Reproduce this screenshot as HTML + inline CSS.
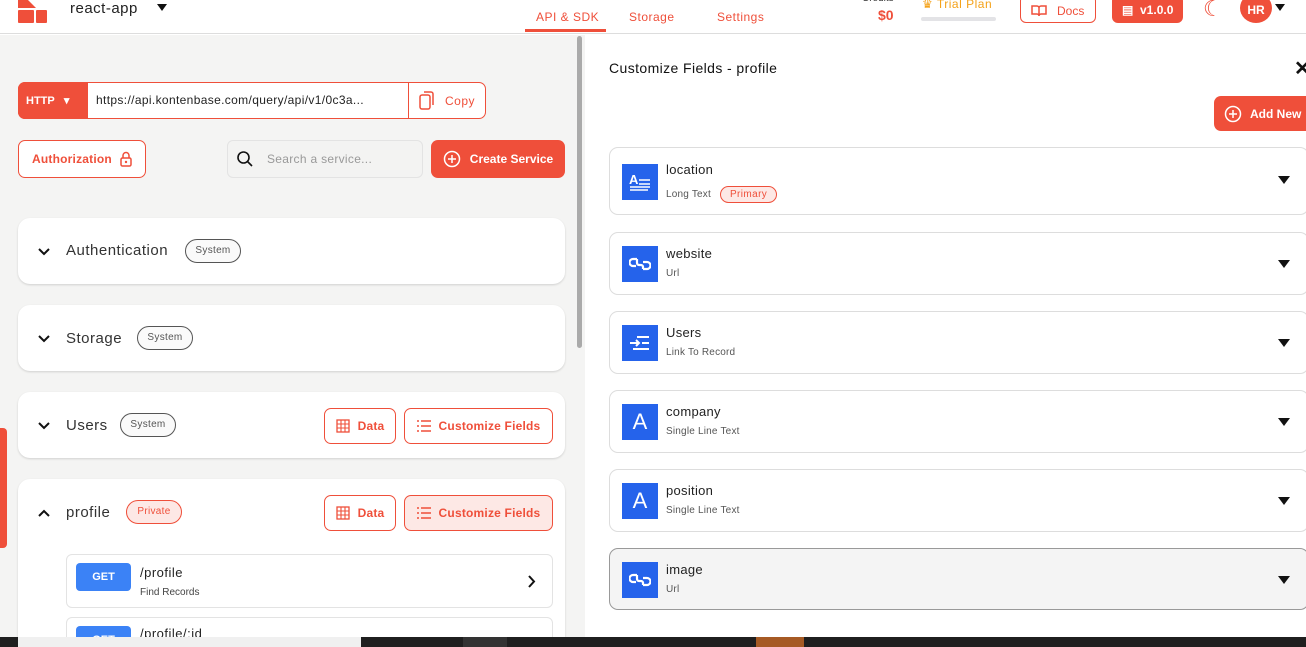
<!DOCTYPE html>
<html><head><meta charset="utf-8"><style>
*{box-sizing:border-box;margin:0;padding:0}
html,body{width:1306px;height:647px;overflow:hidden}
body{font-family:"Liberation Sans",sans-serif;background:#fff;position:relative;color:#222}
#root{position:absolute;left:0;top:0;width:1306px;height:647px;overflow:hidden}
.a{position:absolute}
.red{color:#ef4f3a}
.card{position:absolute;left:18px;width:547px;background:#fff;border-radius:12px;box-shadow:0 1px 2px rgba(0,0,0,.15)}
.chev{position:absolute;left:20px}
.sys{position:absolute;border:1px solid #555;border-radius:12px;font-size:10px;color:#555;height:24px;line-height:22px;text-align:center;width:56px;background:#fafafa;letter-spacing:.3px}
.ob{position:absolute;border:1px solid #ef4f3a;border-radius:7px;color:#ef4f3a;font-size:12px;font-weight:bold;display:flex;align-items:center;justify-content:center;gap:8px;height:36px;letter-spacing:.2px}
.f{position:absolute;left:609px;width:700px;border:1px solid #ddd;border-radius:9px;height:64px;background:#fff}
.f .ic{position:absolute;left:12px;top:15px;width:36px;height:36px;background:#2563eb;color:#fff;display:flex;align-items:center;justify-content:center}
.f .n{position:absolute;left:56px;top:14px;font-size:13px;letter-spacing:.3px}
.f .s{position:absolute;left:56px;top:38px;font-size:10px;color:#555;letter-spacing:.2px}
.f .tri{position:absolute;right:18px;top:28px;width:0;height:0;border-left:6px solid transparent;border-right:6px solid transparent;border-top:8px solid #111}
.t{letter-spacing:.5px}
</style></head><body><div id="root">
<!-- header -->
<div class="a" style="left:0;top:0;width:1306px;height:34px;border-bottom:1px solid #ddd;background:#fff"></div>
<svg class="a" style="left:18px;top:0" width="30" height="24"><rect x="0" y="0" width="10" height="8" fill="#ef4f3a"/><rect x="0" y="10" width="16" height="13" rx="1" fill="#ef4f3a"/><rect x="18" y="10" width="11" height="13" rx="1" fill="#ef4f3a"/><path d="M10 0 L18 8 L10 8Z" fill="#ef4f3a"/></svg>
<div class="a t" style="left:70px;top:0;font-size:15px;color:#222">react-app</div>
<div class="a" style="left:157px;top:4px;border-left:5px solid transparent;border-right:5px solid transparent;border-top:7px solid #111"></div>
<div class="a red t" style="left:536px;top:10px;font-size:12px">API &amp; SDK</div>
<div class="a" style="left:525px;top:29px;width:81px;height:3px;background:#ef4f3a"></div>
<div class="a red t" style="left:629px;top:10px;font-size:12px">Storage</div>
<div class="a red t" style="left:717px;top:10px;font-size:12px">Settings</div>
<div class="a" style="left:862px;top:-7px;font-size:10px;color:#333">Credits</div>
<div class="a red" style="left:878px;top:7px;font-size:14px;font-weight:bold">$0</div>
<div class="a t" style="left:922px;top:-3px;font-size:12px;color:#f4a21a">♛ Trial Plan</div>
<div class="a" style="left:921px;top:17px;width:75px;height:4px;border-radius:2px;background:#e3e3e6"></div>
<div class="a" style="left:1020px;top:-5px;width:76px;height:28px;border:1px solid #ef4f3a;border-radius:6px;color:#ef4f3a;font-size:12px;padding:8px 0 0 10px"><svg width="16" height="13" style="vertical-align:-2px"><path d="M1 2h5a2 2 0 0 1 2 2v8a2 2 0 0 0-2-2H1zM15 2h-5a2 2 0 0 0-2 2v8a2 2 0 0 1 2-2h5z" fill="none" stroke="#ef4f3a" stroke-width="1.5"/></svg>&nbsp;&nbsp; Docs</div>
<div class="a" style="left:1112px;top:-5px;width:71px;height:28px;background:#ef4f3a;border-radius:6px;color:#fff;font-size:12px;font-weight:bold;padding:8px 0 0 10px">&#x25A4;&nbsp; v1.0.0</div>
<div class="a red" style="left:1203px;top:-4px;font-size:22px">☾</div>
<div class="a" style="left:1240px;top:-7px;width:32px;height:30px;border-radius:50%;background:#ef4f3a;color:#fff;font-size:12px;font-weight:bold;text-align:center;padding-top:10px">HR</div>
<div class="a" style="left:1275px;top:4px;border-left:5px solid transparent;border-right:5px solid transparent;border-top:7px solid #111"></div>
<!-- left panel -->
<div class="a" style="left:0;top:35px;width:585px;height:602px;background:#f4f4f3"></div>
<div class="a" style="left:577px;top:36px;width:5px;height:312px;background:#aaa;border-radius:3px"></div>
<div class="a" style="left:0;top:428px;width:7px;height:120px;background:#ef4f3a;border-radius:0 4px 4px 0"></div>
<div class="a" style="left:18px;top:82px;width:468px;height:37px;border-radius:7px;background:#fff;border:1px solid #ef4f3a"></div>
<div class="a" style="left:18px;top:82px;width:70px;height:37px;border-radius:7px 0 0 7px;background:#ef4f3a;color:#fff;font-size:11px;font-weight:bold;padding:12px 0 0 8px">HTTP&nbsp;&nbsp;&nbsp;▾</div>
<div class="a" style="left:96px;top:93px;font-size:12px;letter-spacing:.35px">https://api.kontenbase.com/query/api/v1/0c3a...</div>
<div class="a" style="left:408px;top:82px;width:1px;height:37px;background:#ef4f3a"></div>
<svg class="a" style="left:419px;top:91px" width="16" height="19"><rect x="1" y="4" width="10" height="14" rx="2" fill="none" stroke="#ef4f3a" stroke-width="1.5"/><path d="M5 1h7a2 2 0 0 1 2 2v11" fill="none" stroke="#ef4f3a" stroke-width="1.5"/></svg>
<div class="a red t" style="left:445px;top:94px;font-size:12px">Copy</div>
<div class="ob" style="left:18px;top:140px;height:38px;width:128px;background:#fff">Authorization <svg width="12" height="16"><path d="M3 7V4.5a3 3 0 0 1 6 0V7" fill="none" stroke="#ef4f3a" stroke-width="1.5"/><rect x="1" y="7" width="10" height="8" rx="1.5" fill="none" stroke="#ef4f3a" stroke-width="1.5"/><circle cx="6" cy="11" r="1.2" fill="#ef4f3a"/></svg></div>
<div class="a" style="left:227px;top:140px;width:196px;height:38px;border:1px solid #e3e3e3;border-radius:6px;background:#f3f3f2"></div>
<svg class="a" style="left:236px;top:150px" width="18" height="18"><circle cx="7.5" cy="7.5" r="5.5" fill="none" stroke="#111" stroke-width="1.6"/><path d="M11.5 11.5L16 16" stroke="#111" stroke-width="1.6"/></svg>
<div class="a" style="left:267px;top:152px;font-size:12px;color:#999;letter-spacing:.3px">Search a service...</div>
<div class="a" style="left:431px;top:140px;width:134px;height:38px;background:#ef4f3a;border-radius:7px;color:#fff;font-size:12px;font-weight:bold;display:flex;align-items:center;justify-content:center;gap:9px"><svg width="18" height="18"><circle cx="9" cy="9" r="7.5" fill="none" stroke="#fff" stroke-width="1.5"/><path d="M9 5v8M5 9h8" stroke="#fff" stroke-width="1.5"/></svg>Create Service</div>

<div class="card" style="top:218px;height:66px">
 <svg class="chev" style="top:30px" width="12" height="8"><path d="M1 1l5 5 5-5" fill="none" stroke="#111" stroke-width="2"/></svg>
 <div class="a t" style="left:48px;top:24px;font-size:15px;color:#333">Authentication</div>
 <div class="sys" style="left:167px;top:21px">System</div></div>
<div class="card" style="top:305px;height:66px">
 <svg class="chev" style="top:30px" width="12" height="8"><path d="M1 1l5 5 5-5" fill="none" stroke="#111" stroke-width="2"/></svg>
 <div class="a t" style="left:48px;top:25px;font-size:15px;color:#333">Storage</div>
 <div class="sys" style="left:119px;top:21px">System</div></div>
<div class="card" style="top:392px;height:66px">
 <svg class="chev" style="top:30px" width="12" height="8"><path d="M1 1l5 5 5-5" fill="none" stroke="#111" stroke-width="2"/></svg>
 <div class="a t" style="left:48px;top:25px;font-size:15px;color:#333">Users</div>
 <div class="sys" style="left:102px;top:21px">System</div>
 <div class="ob" style="left:306px;top:16px;width:72px"><svg width="14" height="14"><rect x="1" y="1" width="12" height="12" fill="none" stroke="#ef4f3a" stroke-width="1.3"/><path d="M1 5h12M1 9h12M5 1v12M9 1v12" stroke="#ef4f3a" stroke-width="1.1"/></svg>Data</div>
 <div class="ob" style="left:386px;top:16px;width:149px"><svg width="14" height="12"><path d="M0 1h2M0 6h2M0 11h2M4 1h10M4 6h10M4 11h10" stroke="#ef4f3a" stroke-width="1.6"/></svg>Customize Fields</div></div>
<div class="card" style="top:479px;height:170px">
 <svg class="chev" style="top:30px" width="12" height="8"><path d="M1 7l5-5 5 5" fill="none" stroke="#111" stroke-width="2"/></svg>
 <div class="a t" style="left:48px;top:25px;font-size:15px;color:#333">profile</div>
 <div class="sys" style="left:108px;top:21px;border-color:#ef4f3a;color:#ef4f3a;background:#fde8e5">Private</div>
 <div class="ob" style="left:306px;top:16px;width:72px"><svg width="14" height="14"><rect x="1" y="1" width="12" height="12" fill="none" stroke="#ef4f3a" stroke-width="1.3"/><path d="M1 5h12M1 9h12M5 1v12M9 1v12" stroke="#ef4f3a" stroke-width="1.1"/></svg>Data</div>
 <div class="ob" style="left:386px;top:16px;width:149px;background:#fde8e5"><svg width="14" height="12"><path d="M0 1h2M0 6h2M0 11h2M4 1h10M4 6h10M4 11h10" stroke="#ef4f3a" stroke-width="1.6"/></svg>Customize Fields</div>
 <div class="a" style="left:48px;top:75px;width:487px;height:54px;border:1px solid #e3e3e3;border-radius:6px;background:#fff">
  <div class="a" style="left:9px;top:8px;width:55px;height:28px;background:#3b82f6;border-radius:4px;color:#fff;font-size:11px;font-weight:bold;text-align:center;padding-top:8px">GET</div>
  <div class="a t" style="left:73px;top:10px;font-size:13px">/profile</div>
  <div class="a" style="left:73px;top:32px;font-size:10px;color:#444">Find Records</div>
  <svg class="a" style="left:461px;top:20px" width="8" height="13"><path d="M1 1l5 5.5L1 12" fill="none" stroke="#111" stroke-width="2"/></svg></div>
 <div class="a" style="left:48px;top:138px;width:487px;height:54px;border:1px solid #e3e3e3;border-radius:6px;background:#fff">
  <div class="a" style="left:9px;top:8px;width:55px;height:28px;background:#3b82f6;border-radius:4px;color:#fff;font-size:11px;font-weight:bold;text-align:center;padding-top:8px">GET</div>
  <div class="a t" style="left:73px;top:8px;font-size:13px">/profile/:id</div></div>
</div>
<!-- right panel -->
<div class="a" style="left:609px;top:60px;font-size:14px;color:#111;letter-spacing:.4px">Customize Fields - profile</div>
<div class="a" style="left:1294px;top:56px;font-size:20px;font-weight:bold;color:#111">✕</div>
<div class="a" style="left:1214px;top:96px;width:100px;height:35px;background:#ef4f3a;border-radius:7px;color:#fff;font-size:12px;font-weight:bold;display:flex;align-items:center;padding-left:10px;gap:8px"><svg width="18" height="18"><circle cx="9" cy="9" r="7.5" fill="none" stroke="#fff" stroke-width="1.5"/><path d="M9 5v8M5 9h8" stroke="#fff" stroke-width="1.5"/></svg>Add New</div>

<div class="f" style="top:147px;height:68px"><div class="ic" style="top:16px"><svg width="24" height="20"><text x="1" y="12" font-size="13" fill="#fff" font-family="Liberation Sans" font-weight="bold">A</text><path d="M11 8h11M11 12h11M2 15h20M2 18h18" stroke="#fff" stroke-width="1.6"/></svg></div><div class="n" style="top:14px">location</div><div class="s" style="top:38px">Long Text <span style="display:inline-block;margin-left:6px;border:1px solid #ef4f3a;border-radius:10px;padding:2px 9px;color:#ef4f3a;background:#fde8e5;letter-spacing:.4px">Primary</span></div><div class="tri"></div></div>
<div class="f" style="top:232px;height:63px"><div class="ic" style="top:13px"><svg width="22" height="16"><path d="M8 3H4a3 3 0 0 0 0 7h3M14 6h4a3 3 0 0 1 0 7h-4M8 3v4a2 2 0 0 0 2 2h2a2 2 0 0 1 2 2v2" fill="none" stroke="#fff" stroke-width="2.2"/></svg></div><div class="n" style="top:13px">website</div><div class="s" style="top:35px">Url</div><div class="tri" style="top:27px"></div></div>
<div class="f" style="top:311px;height:63px"><div class="ic" style="top:13px"><svg width="22" height="18"><path d="M8 3h12M1 9h9M7 6l3 3-3 3M13 9h7M4 15h16" fill="none" stroke="#fff" stroke-width="2"/></svg></div><div class="n" style="top:13px">Users</div><div class="s" style="top:35px">Link To Record</div><div class="tri" style="top:27px"></div></div>
<div class="f" style="top:390px;height:63px"><div class="ic" style="top:13px;font-size:22px">A</div><div class="n" style="top:13px">company</div><div class="s" style="top:35px">Single Line Text</div><div class="tri" style="top:27px"></div></div>
<div class="f" style="top:469px;height:63px"><div class="ic" style="top:13px;font-size:22px">A</div><div class="n" style="top:13px">position</div><div class="s" style="top:35px">Single Line Text</div><div class="tri" style="top:27px"></div></div>
<div class="f" style="top:548px;height:62px;background:#f4f4f4;border-color:#999"><div class="ic" style="top:13px"><svg width="22" height="16"><path d="M8 3H4a3 3 0 0 0 0 7h3M14 6h4a3 3 0 0 1 0 7h-4M8 3v4a2 2 0 0 0 2 2h2a2 2 0 0 1 2 2v2" fill="none" stroke="#fff" stroke-width="2.2"/></svg></div><div class="n" style="top:13px">image</div><div class="s" style="top:35px">Url</div><div class="tri" style="top:27px"></div></div>
<!-- taskbar -->
<div class="a" style="left:0;top:637px;width:1306px;height:10px;background:#1f1f1f"></div>
<div class="a" style="left:18px;top:637px;width:343px;height:10px;background:#f0f0f0"></div>
<div class="a" style="left:756px;top:637px;width:48px;height:10px;background:#a65a24"></div>
<div class="a" style="left:463px;top:637px;width:44px;height:10px;background:#333"></div>
</div></body></html>
